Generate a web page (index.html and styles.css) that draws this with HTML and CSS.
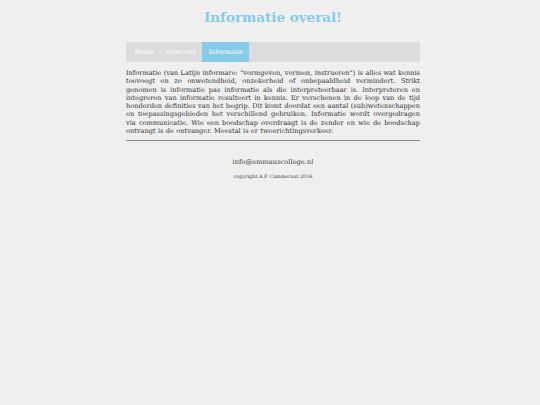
FILE: index.html
```html
<!DOCTYPE html>
<html lang="nl">
<head>
<meta charset="utf-8">
<title>Informatie overal!</title>
<link rel="stylesheet" href="styles.css">
</head>
<body>
<div class="wrap">
  <h1 class="title">Informatie overal!</h1>
  <nav class="nav">
    <a class="nav-link" href="#">Home</a>
    <a class="nav-link" href="#">Over ons</a>
    <a class="nav-link active" href="#">Informatie</a>
  </nav>
  <p class="text">Informatie (van Latijn informare: "vormgeven, vormen, instrueren") is alles wat kennis toevoegt en zo onwetendheid, onzekerheid of onbepaaldheid vermindert. Strikt genomen is informatie pas informatie als die interpreteerbaar is. Interpreteren en integreren van informatie resulteert in kennis. Er verschenen in de loop van de tijd honderden definities van het begrip. Dit komt doordat een aantal (sub)wetenschappen en toepassingsgebieden het verschillend gebruiken. Informatie wordt overgedragen via communicatie. Wie een boodschap overdraagt is de zender en wie de boodschap ontvangt is de ontvanger. Meestal is er tweerichtingsverkeer.</p>
  <hr class="rule">
  <footer class="footer">
    <p class="email">info@emmauscollege.nl</p>
    <p class="copy">copyright A.P. Cammeraat 2016</p>
  </footer>
</div>
</body>
</html>
```

FILE: styles.css
```css
html, body {
  background: #efefef;
}
body {
  margin: 0;
  padding: 0 0 0 6px;
  font-family: "DejaVu Serif", serif;
  color: #333;
}
.wrap {
  width: 294px;
  margin: 0 auto;
}
.title {
  margin: 0;
  padding-top: 8px;
  height: 34px;
  box-sizing: border-box;
  text-align: center;
  font-size: 13.5px;
  line-height: 18px;
  font-weight: bold;
  color: #86cbe8;
}
.nav {
  display: flex;
  background: #dcdcdc;
  height: 20px;
  margin-top: 8px;
  padding-left: 2px;
}
.nav-link {
  display: flex;
  align-items: center;
  padding: 0 6.5px;
  font-size: 6.4px;
  color: #fff;
  text-decoration: none;
}
.nav-link.active {
  background: #86cbe8;
}
.text {
  margin: 7px 0 0;
  font-size: 6.6px;
  line-height: 8.3px;
  word-spacing: 0.25px;
  text-align: justify;
  color: #333;
}
.rule {
  margin: 5px 0 0;
  border: 0;
  border-top: 1px solid #888;
  height: 0;
}
.footer {
  text-align: center;
}
.email {
  margin: 17px 0 0;
  font-size: 6.7px;
  line-height: 9px;
  color: #444;
}
.copy {
  margin: 6px 0 0;
  font-size: 4.9px;
  line-height: 6px;
  color: #444;
}
```
